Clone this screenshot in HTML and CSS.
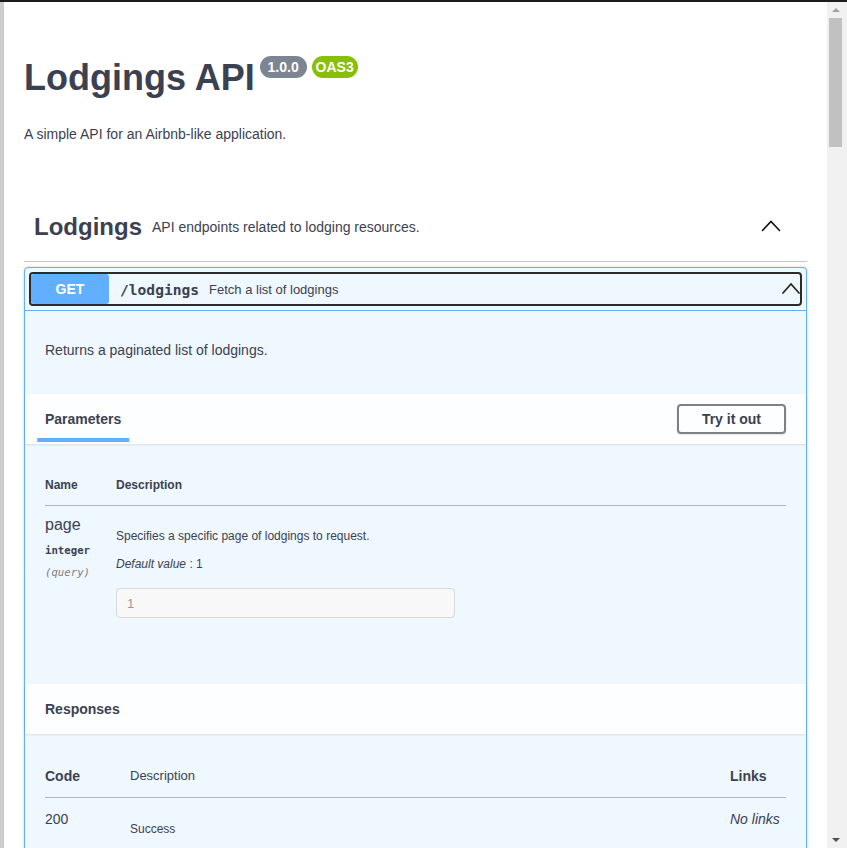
FILE: index.html
```html
<!DOCTYPE html>
<html lang="en">
<head>
<meta charset="utf-8">
<title>Lodgings API</title>
<link rel="stylesheet" href="styles.css">
</head>
<body>
<div class="topbar"></div>
<div class="frame">
  <div class="edge"></div>
  <main class="page">
    <section class="info">
      <div class="title-row">
        <h1 class="title">Lodgings API</h1>
        <span class="badge badge-version"> 1.0.0 </span>
        <span class="badge badge-oas">OAS3</span>
      </div>
      <p class="info-desc">A simple API for an Airbnb-like application.</p>
    </section>

    <section class="tag-section">
      <div class="tag-header">
        <h3 class="tag-name">Lodgings</h3>
        <p class="tag-desc">API endpoints related to lodging resources.</p>
        <svg class="tag-arrow" width="20" height="20" viewBox="0 0 20 20"><polyline points="1.5,13.5 10,4.5 18.5,13.5" fill="none" stroke="#111" stroke-width="1.6" stroke-linecap="round" stroke-linejoin="miter"/></svg>
      </div>

      <div class="opblock">
        <div class="summary">
          <div class="summary-control">
            <span class="method">GET</span>
            <span class="path">/lodgings</span>
            <span class="summary-desc">Fetch a list of lodgings</span>
            <svg class="summary-arrow" width="18" height="20" viewBox="0 0 18 20"><polyline points="1,14 9,5 17,14" fill="none" stroke="#222" stroke-width="1.7" stroke-linecap="round" stroke-linejoin="miter"/></svg>
          </div>
        </div>

        <div class="op-body">
          <div class="op-desc"><p>Returns a paginated list of lodgings.</p></div>

          <div class="section-header">
            <div class="tab"><h4 class="tab-title"><span>Parameters</span></h4></div>
            <button class="try-out" type="button">Try it out</button>
          </div>

          <div class="table-wrap params-wrap">
            <table class="params-table">
              <thead>
                <tr><th class="col-name">Name</th><th>Description</th></tr>
              </thead>
              <tbody>
                <tr>
                  <td class="col-name">
                    <div class="param-name">page</div>
                    <div class="param-type">integer</div>
                    <div class="param-in">(query)</div>
                  </td>
                  <td>
                    <p class="param-desc">Specifies a specific page of lodgings to request.</p>
                    <p class="param-default"><i>Default value</i> : 1</p>
                    <input class="param-input" type="text" placeholder="1" disabled>
                  </td>
                </tr>
              </tbody>
            </table>
          </div>

          <div class="section-header">
            <h4 class="section-title">Responses</h4>
          </div>

          <div class="table-wrap responses-wrap">
            <table class="responses-table">
              <thead>
                <tr>
                  <td class="col-code">Code</td>
                  <td class="col-desc">Description</td>
                  <td class="col-links">Links</td>
                </tr>
              </thead>
              <tbody>
                <tr>
                  <td class="col-code">200</td>
                  <td class="col-desc"><div class="resp-desc">Success</div></td>
                  <td class="col-links"><i>No links</i></td>
                </tr>
              </tbody>
            </table>
          </div>
        </div>
      </div>
    </section>
  </main>
  <div class="scrollbar">
    <div class="sb-btn"><span class="tri tri-up"></span></div>
    <div class="sb-thumb"></div>
    <div class="sb-track"></div>
    <div class="sb-btn"><span class="tri tri-down"></span></div>
  </div>
</div>
</body>
</html>
```

FILE: styles.css
```css
* { box-sizing: border-box; }

html, body {
  margin: 0;
  padding: 0;
  height: 100%;
  overflow: hidden;
}

body {
  font-family: "Liberation Sans", Arial, sans-serif;
  color: #3b4151;
  background: #fff;
}

.topbar {
  height: 2px;
  background: #1c1c1c;
}

.frame {
  display: flex;
  height: 846px;
}

.edge {
  width: 4px;
  flex: none;
  background: #cdcdcd;
}

.page {
  flex: 1;
  min-width: 0;
  padding: 0 20px;
  overflow: hidden;
  background: #fff;
}

/* scrollbar */
.scrollbar {
  width: 20px;
  flex: none;
  background: #f1f1f1;
  display: flex;
  flex-direction: column;
}
.sb-btn {
  height: 16px;
  flex: none;
  display: flex;
  align-items: center;
  padding-left: 5px;
}
.tri {
  width: 0;
  height: 0;
  border-left: 4px solid transparent;
  border-right: 4px solid transparent;
}
.tri-up { border-bottom: 4px solid #a3a3a3; }
.tri-down { border-top: 4px solid #505050; }
.sb-thumb {
  margin-left: 2px;
  width: 13px;
  height: 129px;
  flex: none;
  background: #c1c1c1;
}
.sb-track { flex: 1; }

/* info */
.info {
  padding-top: 54px;
}
.title-row {
  display: flex;
  align-items: flex-start;
}
.title {
  margin: 2px 0 0;
  font-size: 36px;
  line-height: 40px;
  font-weight: 700;
  color: #3b4151;
}
.badge {
  display: inline-block;
  margin-left: 5px;
  padding: 3px 4px;
  border-radius: 57px;
  color: #fff;
  font-size: 14px;
  line-height: 16px;
  font-weight: 700;
  white-space: pre;
}
.badge-version { background: #7d8492; margin-left: 5px; }
.badge-oas { background: #89bf04; }

.info-desc {
  margin: 26px 0 0;
  font-size: 14px;
  line-height: 20px;
}

/* tag */
.tag-section {
  margin-top: 49px;
}
.tag-header {
  display: flex;
  align-items: center;
  height: 69px;
  padding: 10px 20px 10px 10px;
  border-bottom: 1px solid rgba(59, 65, 81, 0.3);
}
.tag-name {
  margin: 0;
  font-size: 24px;
  font-weight: 700;
  line-height: 30px;
}
.tag-desc {
  flex: 1;
  margin: 0;
  padding: 0 10px;
  font-size: 14px;
  line-height: 20px;
}
.tag-arrow {
  flex: none;
  margin-right: 6px;
}

/* operation block */
.opblock {
  margin-top: 5px;
  border: 1px solid #61affe;
  border-radius: 4px;
  background: #eff7ff;
  box-shadow: 0 0 3px rgba(0, 0, 0, 0.19);
}
.summary {
  padding: 4px;
  border-bottom: 1px solid #61affe;
}
.summary-control {
  display: flex;
  align-items: center;
  border: 2px solid #2b2b2b;
  border-radius: 4px;
}
.method {
  width: 78px;
  height: 30px;
  line-height: 30px;
  flex: none;
  text-align: center;
  background: #61affe;
  border-radius: 3px;
  color: #fff;
  font-size: 14px;
  font-weight: 700;
}
.path {
  padding: 0 10px 0 11px;
  font-family: "DejaVu Sans Mono", "Liberation Mono", monospace;
  font-size: 14.6px;
  font-weight: 700;
  color: #3b4151;
}
.summary-desc {
  flex: 1;
  font-size: 13px;
  color: #3b4151;
}
.summary-arrow {
  flex: none;
}

.op-desc {
  padding: 29px 20px 34px;
}
.op-desc p {
  margin: 0;
  font-size: 14px;
  line-height: 20px;
}

.section-header {
  display: flex;
  align-items: center;
  justify-content: space-between;
  height: 50px;
  padding: 0 20px;
  background: rgba(255, 255, 255, 0.8);
  box-shadow: 0 1px 2px rgba(0, 0, 0, 0.1);
}
.tab-title,
.section-title {
  margin: 0;
  font-size: 14px;
  line-height: 20px;
  font-weight: 700;
}
.tab-title span {
  position: relative;
}
.tab-title span::after {
  content: "";
  position: absolute;
  left: 50%;
  bottom: -15px;
  width: 120%;
  height: 4px;
  transform: translateX(-50%);
  background: #61affe;
}
.try-out {
  height: 30px;
  padding: 0 23px;
  border: 2px solid #808080;
  border-radius: 4px;
  background: transparent;
  box-shadow: 0 1px 2px rgba(0, 0, 0, 0.1);
  font-family: inherit;
  font-size: 14px;
  font-weight: 700;
  color: #3b4151;
}

/* tables */
.table-wrap {
  padding: 21px 20px 0;
}
.params-wrap {
  padding-bottom: 66px;
}
.responses-wrap {
  padding-bottom: 60px;
}
table {
  width: 100%;
  border-collapse: collapse;
}
.params-table th {
  padding: 12px 0;
  text-align: left;
  font-size: 12px;
  line-height: 16px;
  font-weight: 700;
  border-bottom: 1px solid rgba(59, 65, 81, 0.2);
}
.params-table td {
  padding: 10px 0 0;
  vertical-align: top;
}
.params-table .col-name {
  width: 71px;
}
.param-name {
  font-size: 16px;
  line-height: 18px;
}
.param-type {
  margin-top: 10px;
  font-family: "DejaVu Sans Mono", "Liberation Mono", monospace;
  font-size: 10.7px;
  line-height: 14px;
  font-weight: 700;
}
.param-in {
  margin-top: 8px;
  font-family: "DejaVu Sans Mono", "Liberation Mono", monospace;
  font-size: 10.7px;
  line-height: 14px;
  font-style: italic;
  color: #808080;
}
.param-desc,
.param-default {
  margin: 12px 0 0;
  font-size: 12px;
  line-height: 16px;
}
.param-input {
  display: block;
  margin-top: 16px;
  width: 339px;
  height: 30px;
  padding: 0 10px;
  border: 1px solid #d9d9d9;
  border-radius: 4px;
  background: #f8f8f8;
  font-family: "Liberation Sans", Arial, sans-serif;
  font-size: 13px;
  color: #888;
}
.param-input::placeholder {
  font-family: "Liberation Sans", Arial, sans-serif;
  color: #999;
}

.responses-table thead td {
  padding: 12px 0;
  line-height: 18px;
  border-bottom: 1px solid rgba(59, 65, 81, 0.2);
}
.responses-table td {
  vertical-align: top;
  text-align: left;
}
.responses-table tbody td {
  padding: 12px 0 0;
  line-height: 18px;
  font-size: 14px;
}
.responses-table .col-code {
  width: 85px;
  font-size: 14px;
}
.responses-table thead .col-code,
.responses-table thead .col-links {
  font-weight: 700;
}
.responses-table thead .col-desc {
  font-size: 13px;
  font-weight: 400;
}
.responses-table .col-links {
  width: 56px;
  font-size: 14px;
}
.resp-desc {
  margin-top: 11px;
  font-size: 12px;
  line-height: 16px;
}
```
